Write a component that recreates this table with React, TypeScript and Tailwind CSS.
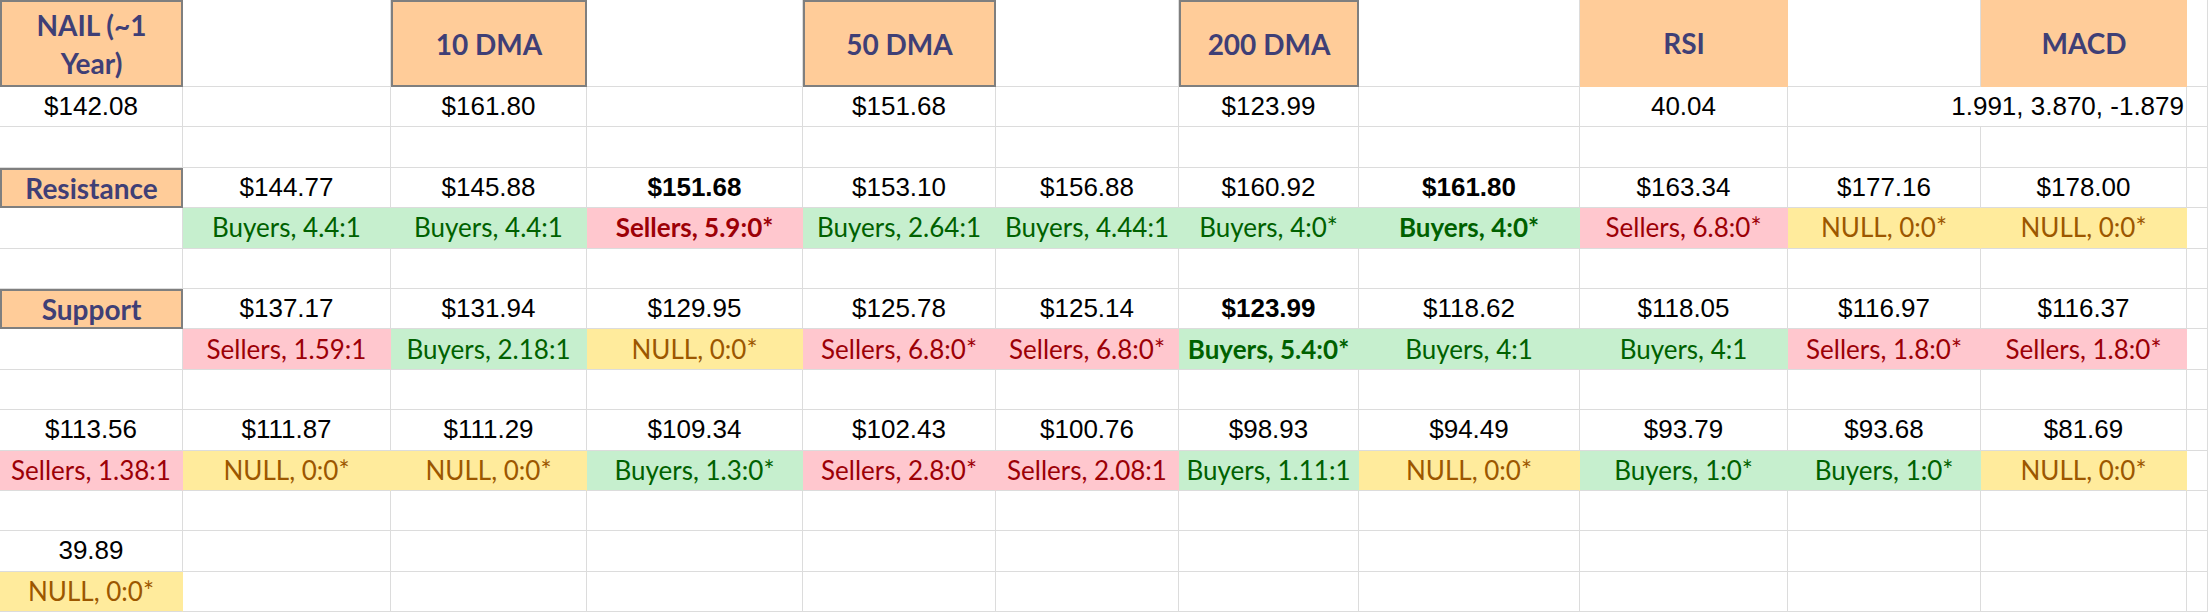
import React from "react";

// codes: h = header (bordered), H = header (no border), v = value, V = bold value,
// m = value right aligned (overflows left), g/G = buyers, r/R = sellers, n = null
const rows: string[][] = [
  ["h:NAIL (~1\nYear)", "", "h:10 DMA", "", "h:50 DMA", "", "h:200 DMA", "", "H:RSI", "", "H:MACD", ""],
  ["v:$142.08", "", "v:$161.80", "", "v:$151.68", "", "v:$123.99", "", "v:40.04", "x:", "m:1.991, 3.870, -1.879", ""],
  ["", "", "", "", "", "", "", "", "", "", "", ""],
  ["h:Resistance", "v:$144.77", "v:$145.88", "V:$151.68", "v:$153.10", "v:$156.88", "v:$160.92", "V:$161.80", "v:$163.34", "v:$177.16", "v:$178.00", ""],
  ["", "g:Buyers, 4.4:1", "g:Buyers, 4.4:1", "R:Sellers, 5.9:0*", "g:Buyers, 2.64:1", "g:Buyers, 4.44:1", "g:Buyers, 4:0*", "G:Buyers, 4:0*", "r:Sellers, 6.8:0*", "n:NULL, 0:0*", "n:NULL, 0:0*", ""],
  ["", "", "", "", "", "", "", "", "", "", "", ""],
  ["h:Support", "v:$137.17", "v:$131.94", "v:$129.95", "v:$125.78", "v:$125.14", "V:$123.99", "v:$118.62", "v:$118.05", "v:$116.97", "v:$116.37", ""],
  ["", "r:Sellers, 1.59:1", "g:Buyers, 2.18:1", "n:NULL, 0:0*", "r:Sellers, 6.8:0*", "r:Sellers, 6.8:0*", "G:Buyers, 5.4:0*", "g:Buyers, 4:1", "g:Buyers, 4:1", "r:Sellers, 1.8:0*", "r:Sellers, 1.8:0*", ""],
  ["", "", "", "", "", "", "", "", "", "", "", ""],
  ["v:$113.56", "v:$111.87", "v:$111.29", "v:$109.34", "v:$102.43", "v:$100.76", "v:$98.93", "v:$94.49", "v:$93.79", "v:$93.68", "v:$81.69", ""],
  ["r:Sellers, 1.38:1", "n:NULL, 0:0*", "n:NULL, 0:0*", "g:Buyers, 1.3:0*", "r:Sellers, 2.8:0*", "r:Sellers, 2.08:1", "g:Buyers, 1.11:1", "n:NULL, 0:0*", "g:Buyers, 1:0*", "g:Buyers, 1:0*", "n:NULL, 0:0*", ""],
  ["", "", "", "", "", "", "", "", "", "", "", ""],
  ["v:39.89", "", "", "", "", "", "", "", "", "", "", ""],
  ["n:NULL, 0:0*", "", "", "", "", "", "", "", "", "", "", ""],
];

const base = "flex items-center justify-center whitespace-nowrap border-r border-b";

function Cell({ raw }: { raw: string }) {
  const i = raw.indexOf(":");
  const kind = i > 0 ? raw.slice(0, i) : "";
  const text = i > 0 ? raw.slice(i + 1) : "";

  switch (kind) {
    case "h":
      return (
        <div className="flex items-center justify-center text-center border-2 border-[#7f7f7f] bg-[#ffcc99] font-['Lato',sans-serif] font-bold text-[28px] leading-[38px] text-[#3f3f76]">
          <span>
            {text.split("\n").map((l, k) => (
              <div key={k}>{l}</div>
            ))}
          </span>
        </div>
      );
    case "H":
      return (
        <div className="flex items-center justify-center bg-[#ffcc99] border-b border-[#ffcc99] font-['Lato',sans-serif] font-bold text-[28px] text-[#3f3f76]">
          {text}
        </div>
      );
    case "v":
    case "V":
      return (
        <div
          className={`${base} border-[#dcdcdc] font-['Liberation_Sans',Arial,sans-serif] text-[26px] text-black ${
            kind === "V" ? "font-bold" : ""
          }`}
        >
          {text}
        </div>
      );
    case "m":
      return (
        <div className="flex items-center justify-end whitespace-nowrap pr-0.5 border-r border-b border-[#dcdcdc] font-['Liberation_Sans',Arial,sans-serif] text-[26px] text-black">
          {text}
        </div>
      );
    case "x":
      return <div className="border-b border-[#dcdcdc]" />;
    case "g":
    case "G":
      return (
        <div
          className={`${base} bg-[#c6efce] border-r-[#c6efce] border-b-[#dcdcdc] font-['Lato',sans-serif] text-[26px] text-[#006100] ${
            kind === "G" ? "font-bold" : ""
          }`}
        >
          {text}
        </div>
      );
    case "r":
    case "R":
      return (
        <div
          className={`${base} bg-[#ffc7ce] border-r-[#ffc7ce] border-b-[#dcdcdc] font-['Lato',sans-serif] text-[26px] text-[#9c0006] ${
            kind === "R" ? "font-bold" : ""
          }`}
        >
          {text}
        </div>
      );
    case "n":
      return (
        <div className={`${base} bg-[#ffeb9c] border-r-[#ffeb9c] border-b-[#dcdcdc] font-['Lato',sans-serif] text-[26px] text-[#9c5700]`}>
          {text}
        </div>
      );
    default:
      return <div className="border-r border-b border-[#dcdcdc]" />;
  }
}

export default function App() {
  return (
    <div className="w-[2208px] h-[614px] bg-white overflow-hidden">
      <div className="grid grid-cols-[183px_208px_196px_216px_193px_183px_180px_221px_208px_193px_206px_1fr] grid-rows-[87px_repeat(13,40.4px)]">
        {rows.map((r, ri) => r.map((c, ci) => <Cell key={`${ri}-${ci}`} raw={c} />))}
      </div>
    </div>
  );
}
